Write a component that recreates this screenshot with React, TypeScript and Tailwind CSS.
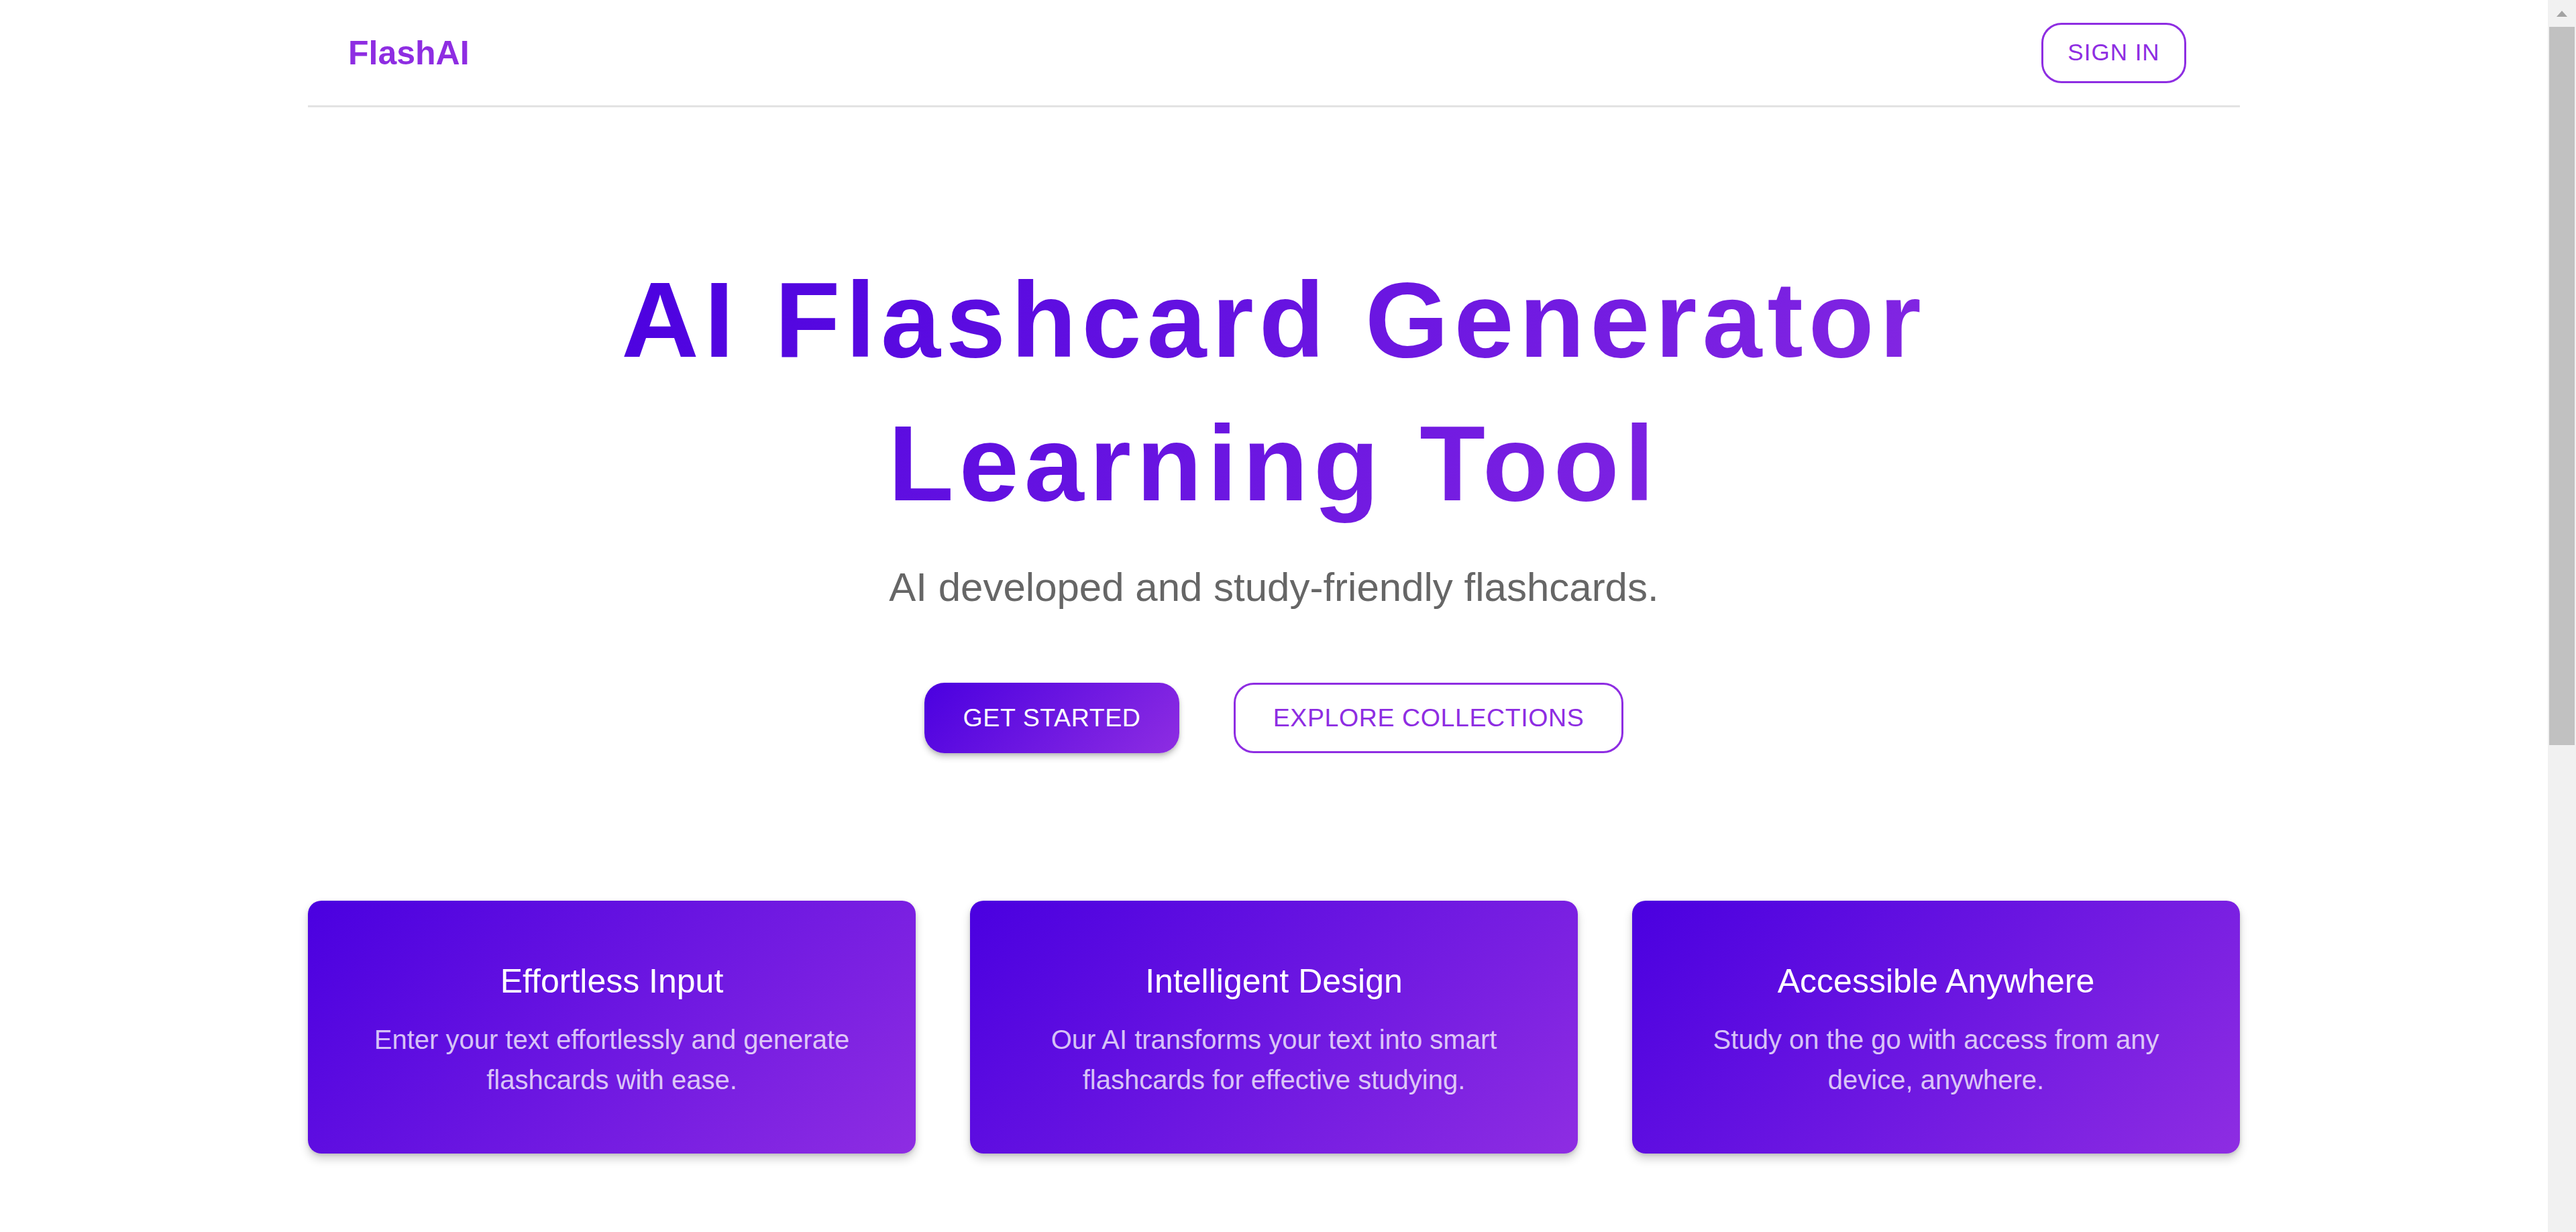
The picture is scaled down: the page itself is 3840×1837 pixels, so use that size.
import React from "react";

const features = [
  {
    title: "Effortless Input",
    text: "Enter your text effortlessly and generate flashcards with ease.",
  },
  {
    title: "Intelligent Design",
    text: "Our AI transforms your text into smart flashcards for effective studying.",
  },
  {
    title: "Accessible Anywhere",
    text: "Study on the go with access from any device, anywhere.",
  },
];

function FeatureCard({ title, text }: { title: string; text: string }) {
  return (
    <div className="rounded-[20px] bg-[linear-gradient(135deg,#4a00e0,#8e2de2)] px-[60px] py-[80px] text-center shadow-[0_8px_14px_rgba(0,0,0,0.18),0_2px_5px_rgba(0,0,0,0.12)]">
      <h3 className="text-[50px] font-normal leading-[80px] text-white">{title}</h3>
      <p className="mt-[17px] text-[40px] leading-[60px] text-white/75">{text}</p>
    </div>
  );
}

// the browser's scrollbar, drawn as a strip at the right
function ScrollStrip() {
  return (
    <aside className="flex w-[42px] shrink-0 flex-col bg-[#f1f1f1]">
      <div className="flex h-[40px] items-center justify-center">
        <svg width="16" height="9" viewBox="0 0 16 9">
          <path d="M8 0 L16 9 L0 9 Z" fill="#a3a3a3" />
        </svg>
      </div>
      <div className="mx-[2px] h-[1071px] bg-[#c1c1c1]" />
    </aside>
  );
}

export default function App() {
  return (
    <div className="flex h-[1837px] overflow-hidden bg-white font-['Liberation_Sans',Arial,sans-serif]">
      <div className="min-w-0 flex-1">
        <div className="mx-auto w-full max-w-[3000px] px-[60px]">
          {/* top bar */}
          <header className="flex h-[160px] items-center justify-between border-b-[3px] border-[#e3e3e3] pl-[60px] pr-[80px]">
            <span className="text-[50px] font-bold leading-none text-[#8e2de2]">FlashAI</span>
            <button className="flex h-[90px] w-[216px] items-center justify-center rounded-[30px] border-[3px] border-[#8e2de2] text-[35px] uppercase tracking-[1px] text-[#8e2de2]">
              Sign In
            </button>
          </header>

          {/* hero */}
          <section className="mt-[210px] flex flex-col items-center text-center">
            <h1 className="inline-block bg-[linear-gradient(135deg,#4a00e0,#8a2be2)] bg-clip-text text-[160px] font-bold leading-[214px] tracking-[8px] text-transparent">
              <span className="block">AI Flashcard Generator</span>
              <span className="block">Learning Tool</span>
            </h1>
            <p className="mt-[38px] text-[60px] leading-[80px] text-[#666666]">
              AI developed and study-friendly flashcards.
            </p>
            <div className="mt-[102px] flex gap-[81px]">
              <button className="flex h-[105px] w-[380px] items-center justify-center rounded-[30px] bg-[linear-gradient(135deg,#4a00e0,#8e2de2)] text-[37.5px] uppercase tracking-[0.6px] text-white shadow-[0_6px_10px_rgba(0,0,0,0.2),0_2px_4px_rgba(0,0,0,0.12)]">
                Get Started
              </button>
              <button className="flex h-[105px] w-[581px] items-center justify-center rounded-[30px] border-[3px] border-[#8e2de2] text-[37.5px] uppercase tracking-[0.6px] text-[#8e2de2]">
                Explore Collections
              </button>
            </div>
          </section>

          {/* features */}
          <section className="mt-[220px] grid grid-cols-3 gap-[81px]">
            {features.map((f) => (
              <FeatureCard key={f.title} title={f.title} text={f.text} />
            ))}
          </section>
        </div>
      </div>
      <ScrollStrip />
    </div>
  );
}
